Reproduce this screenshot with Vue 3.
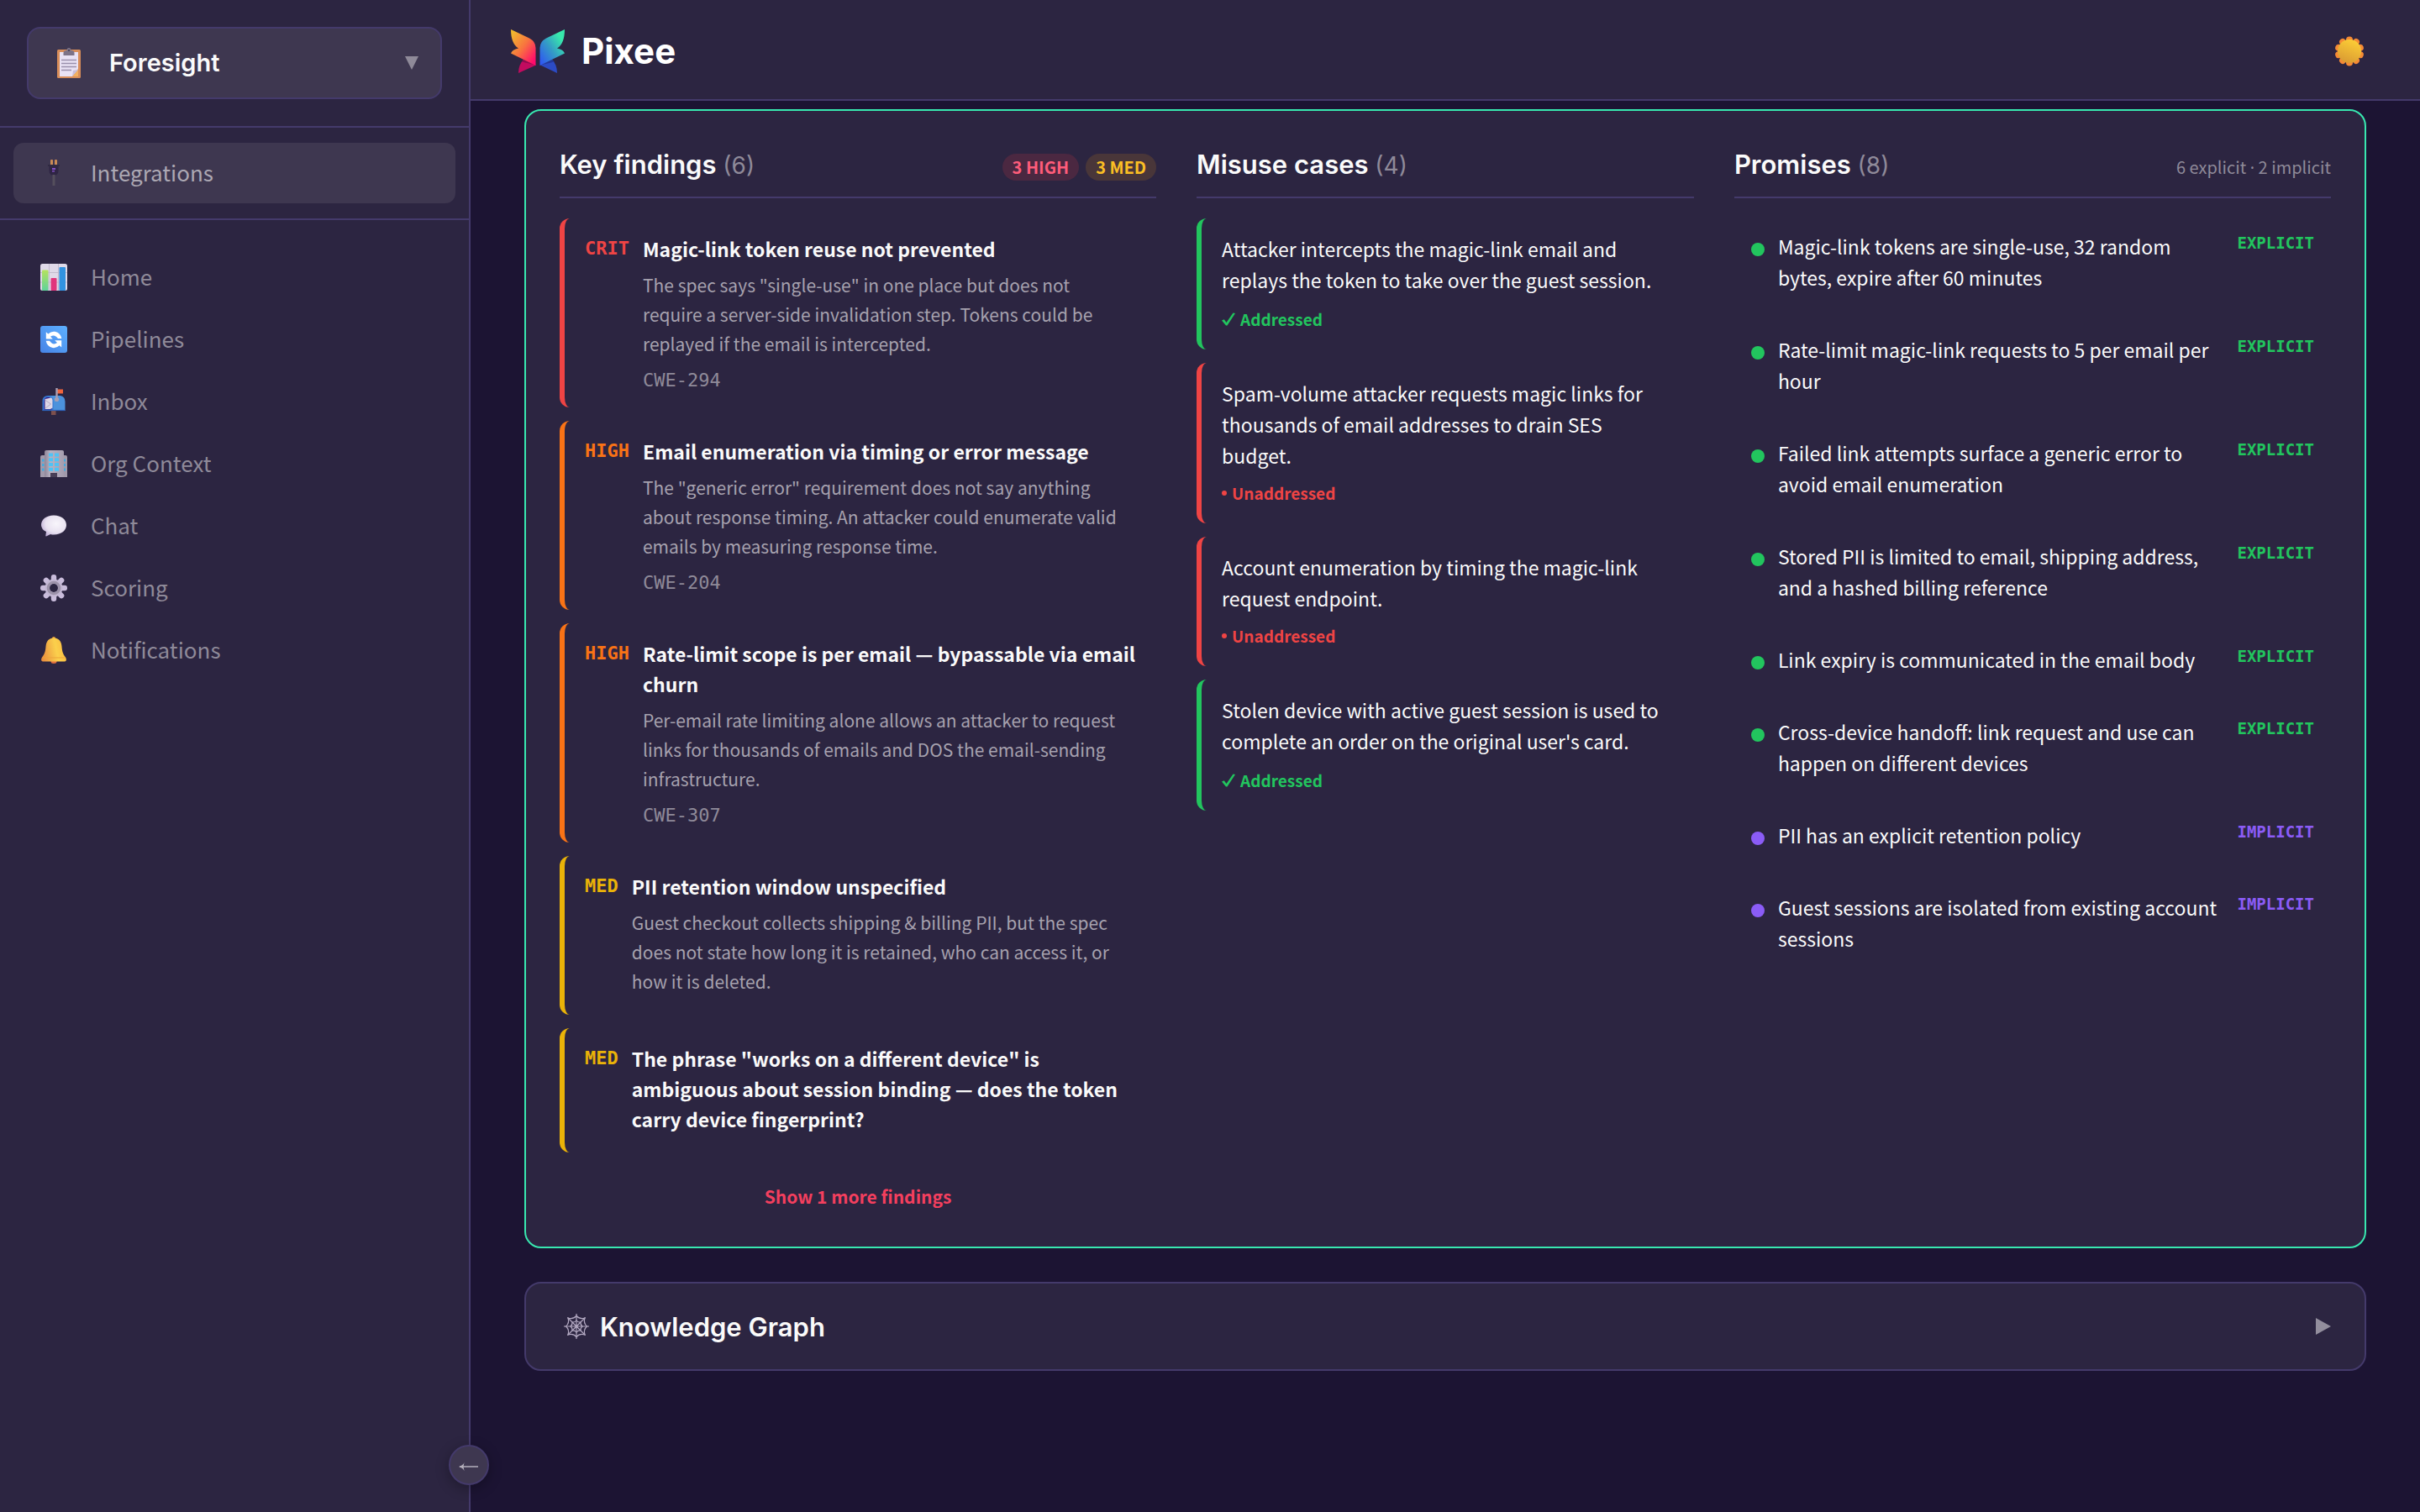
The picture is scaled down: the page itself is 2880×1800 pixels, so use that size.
<template>
  <div class="layout">
    <aside class="sidebar">
      <div class="product-wrap">
        <button type="button" class="product">
          <svg class="product-icon" viewBox="0 0 32 38" aria-hidden="true">
            <rect x="2" y="3" width="28" height="34" rx="1.500" fill="#d98e5a" />
            <path d="M5 6h22v20l-7 9H5z" fill="#e9e2f4" />
            <path d="M27 27v8h-7z" fill="#f2b061" />
            <path d="M20 35l1-7 6-1z" fill="#c9bfdc" />
            <path d="M9.500 10V7q0-3 4-3 0-3 2.500-3t2.500 3q4 0 4 3v3z" fill="#7d7387" />
            <circle cx="16" cy="4" r="1" fill="#3e3750" />
            <path d="M7 15.500h18M7 19.500h18M7 23.500h18M7 27.500h12" stroke="#9a90ac" stroke-width="1.500" />
          </svg>
          <span class="product-name">Foresight</span>
          <svg class="caret" viewBox="0 0 16 16" aria-hidden="true">
            <path d="M0 0h16L8 16z" fill="#8f8a99" />
          </svg>
        </button>
      </div>

      <div class="integrations-wrap">
        <a href="#integrations" class="nav-link active">
          <svg class="nav-icon" viewBox="0 0 32 32" aria-hidden="true">
            <rect x="12" y="0" width="3" height="7" rx="1" fill="#c98a55" />
            <rect x="17" y="0" width="3" height="7" rx="1" fill="#c98a55" />
            <rect x="9" y="6" width="14" height="2" fill="#302a42" />
            <path d="M10.500 8h11v5q0 4-3 5.500h-5q-3-1.500-3-5.500z" fill="#2f2544" />
            <path d="M14 10h4v2h-4zM14 13h3v1.500h-3z" fill="#8350c8" />
            <path d="M16 18v13" stroke="#544f5c" stroke-width="3" />
          </svg>
          <span class="nav-label">Integrations</span>
        </a>
      </div>

      <nav class="nav">
        <a v-for="item in navItems" :key="item.id" :href="`#${item.id}`" class="nav-link">
          <svg v-if="item.id === 'home'" class="nav-icon" viewBox="0 0 32 32" aria-hidden="true">
            <defs>
              <linearGradient id="bar-green" x1="0" y1="0" x2="0" y2="1">
                <stop offset="0" stop-color="#b5e25e" />
                <stop offset="1" stop-color="#5fd39a" />
              </linearGradient>
            </defs>
            <rect width="32" height="32" rx="2.500" fill="#dfd9e8" />
            <path d="M0 10.500h32M0 22h32M10.500 0v32M21.500 0v32" stroke="#c3bbcd" />
            <rect x="2" y="7.500" width="7.500" height="24.500" rx="1" fill="url(#bar-green)" />
            <rect x="12.500" y="17" width="7" height="15" rx="1" fill="#e0347c" />
            <rect x="22.500" y="4" width="7.500" height="28" rx="1" fill="#3192e0" />
          </svg>
          <svg v-else-if="item.id === 'pipelines'" class="nav-icon" viewBox="0 0 32 32" aria-hidden="true">
            <defs>
              <linearGradient id="tile-blue" x1="1" y1="0" x2="0" y2="1">
                <stop offset="0" stop-color="#5db0ff" />
                <stop offset="1" stop-color="#4683e6" />
              </linearGradient>
            </defs>
            <rect width="32" height="32" rx="3" fill="url(#tile-blue)" />
            <path d="M6.800 7.200v8.300h8L12 12.700q5-3.500 9 2.300h4.300Q24 8 17.500 6.800 13 6 9.300 9.600z" fill="#fff" />
            <path d="M25.200 25.600v-8.300h-8l2.800 2.800q-5 3.500-9-2.300H6.700q1.300 7 7.800 8.200 4.500.8 8.200-2.800z" fill="#fff" />
          </svg>
          <svg v-else-if="item.id === 'inbox'" class="nav-icon" viewBox="0 0 32 32" aria-hidden="true">
            <rect x="13" y="26" width="5.500" height="6" fill="#7d504d" />
            <path d="M9 9h14.500q6 1 6 7v11H9z" fill="#4c92dc" />
            <path d="M2.500 27V15.500q0-6.500 6.500-6.500t6.500 6.500V27z" fill="#3775cf" />
            <path d="M4.500 25.500V16q0-5 4.500-5t4.500 5v9.500z" fill="#34137c" />
            <path d="M5.500 13l7.500-1.500q1.500 1 1.500 3v9L12 25H5.500z" fill="#ddd6e6" />
            <path d="M6 14.500l6.500 4.500L6 24" fill="none" stroke="#aaa0b8" stroke-width=".8" />
            <path d="M2.500 26.500h27" stroke="#2e64bd" stroke-width="1.200" />
            <rect x="19" y="1.500" width="8" height="5" fill="#f0643c" />
            <path d="M19.500 0v13" stroke="#a79eb4" stroke-width="2.400" />
            <circle cx="19.500" cy="13.500" r="2.600" fill="#a79eb4" />
          </svg>
          <svg v-else-if="item.id === 'org-context'" class="nav-icon" viewBox="0 0 32 32" aria-hidden="true">
            <defs>
              <linearGradient id="tower" x1="0" y1="0" x2="1" y2="0">
                <stop offset="0" stop-color="#8f8799" />
                <stop offset=".3" stop-color="#b9b2c2" />
                <stop offset="1" stop-color="#a59daf" />
              </linearGradient>
            </defs>
            <path d="M0 32V8q0-2 2-2h28q2 0 2 2v24z" fill="#a19aab" />
            <path d="M5 32V2q0-2 2-2h19q2 0 2 2v30z" fill="url(#tower)" />
            <path d="M10 3.500h5v4h-5zM17 3.500h5v4h-5zM10 9.300h5v4h-5zM17 9.300h5v4h-5zM10 15h5v4h-5zM17 15h5v4h-5zM10 20.700h5v4h-5zM17 20.700h5v4h-5z" fill="#4fc3f5" />
            <path d="M2 10.500h2.500v3H2zM2 16h2.500v3H2zM2 21.500h2.500v3H2zM28 10.500h2v3h-2zM28 16h2v3h-2zM28 21.500h2v3h-2z" fill="#43a9dd" />
            <path d="M12 27h8v5h-8z" fill="#483f57" />
          </svg>
          <svg v-else-if="item.id === 'chat'" class="nav-icon" viewBox="0 0 32 32" aria-hidden="true">
            <defs>
              <radialGradient id="bubble" cx=".6" cy=".4" r=".7">
                <stop offset="0" stop-color="#f8f5fb" />
                <stop offset=".6" stop-color="#e9e2f1" />
                <stop offset="1" stop-color="#b9a7d2" />
              </radialGradient>
            </defs>
            <path d="M16 3.500c9 0 15 5 15 11.500s-6 11.500-15 11.500q-2 0-4-.5l-5 2.500q-1 0-.7-1l.7-4.500Q1 20 1 15C1 8.500 7 3.500 16 3.500z" fill="url(#bubble)" />
          </svg>
          <svg v-else-if="item.id === 'scoring'" class="nav-icon" viewBox="0 0 32 32" aria-hidden="true">
            <g fill="#c9bcdb">
              <rect v-for="angle in gearAngles" :key="angle" x="12.800" y="0" width="6.400" height="12" rx="3" :transform="`rotate(${angle} 16 16)`" />
            </g>
            <circle cx="16" cy="16" r="10.500" fill="#c2b6d2" />
            <circle cx="16" cy="16" r="6.800" fill="none" stroke="#9b91a8" stroke-width="3" />
            <circle cx="16" cy="16" r="5" fill="#2c2541" />
          </svg>
          <svg v-else class="nav-icon" viewBox="0 0 32 32" aria-hidden="true">
            <defs>
              <linearGradient id="bell" x1="0" y1=".6" x2="1" y2=".4">
                <stop offset="0" stop-color="#e98f3f" />
                <stop offset=".6" stop-color="#fbd04c" />
                <stop offset="1" stop-color="#fbb93e" />
              </linearGradient>
            </defs>
            <ellipse cx="16" cy="29.500" rx="3.500" ry="2.500" fill="#e2713f" />
            <circle cx="16" cy="2" r="2" fill="#e9a03d" />
            <path d="M16 1.500c6 0 9 4 9.500 10 .4 6 1.500 9 4.500 13 1.500 2.500 1 5-1 5H3c-2 0-2.500-2.500-1-5 3-4 4.100-7 4.500-13 .5-6 3.500-10 9.500-10z" fill="url(#bell)" />
            <path d="M3 25h26" stroke="#eda53a" />
          </svg>
          <span class="nav-label">{{ item.label }}</span>
        </a>
      </nav>

      <button type="button" class="collapse" aria-label="Collapse sidebar">
        <svg viewBox="0 0 24 12" aria-hidden="true">
          <path d="M1 6h22" stroke="#b5b0bc" stroke-width="1.500" />
          <path d="M6.500 1Q5 4.500 0 6q5 1.500 6.500 5l-1-5z" fill="#b5b0bc" />
        </svg>
      </button>
    </aside>

    <div class="content">
      <header class="topbar">
        <a href="#home" class="brand">
          <svg class="logo" viewBox="0 0 64 52" aria-hidden="true">
            <defs>
              <linearGradient id="wing-left" x1="0" y1=".15" x2=".8" y2="1">
                <stop offset="0" stop-color="#f0b82e" />
                <stop offset=".5" stop-color="#f8743f" />
                <stop offset="1" stop-color="#ff0a6c" />
              </linearGradient>
              <linearGradient id="wing-right" x1="1" y1=".15" x2=".15" y2="1">
                <stop offset=".15" stop-color="#38e8ac" />
                <stop offset=".55" stop-color="#349dc5" />
                <stop offset="1" stop-color="#2f5bf0" />
              </linearGradient>
            </defs>
            <path d="M15 36q-6 6-6 16l21-9.500z" fill="#c20b5f" />
            <path d="M15 36l15 6.500-17-4z" fill="#8d0c50" />
            <path d="M49 36q6 6 6 16l-20-9.500z" fill="#2c4bc4" />
            <path d="M49 36l-14 6.500 17-4z" fill="#23389a" />
            <path d="M0 0l22 10.500q7.500 4 7.500 11.500v21L0 28.500Q1.500 24 9 22.500 0 17 0 0z" fill="url(#wing-left)" />
            <path d="M64 0L42 10.500q-7.500 4-7.500 11.500v21L64 28.500Q62.500 24 55 22.500 64 17 64 0z" fill="url(#wing-right)" />
          </svg>
          <span class="brand-name">Pixee</span>
        </a>
        <button type="button" class="theme-toggle" aria-label="Toggle theme">
          <svg viewBox="0 0 40 40" aria-hidden="true">
            <defs>
              <linearGradient id="sun-face" x1=".7" y1="0" x2=".3" y2="1">
                <stop offset="0" stop-color="#fdce36" />
                <stop offset="1" stop-color="#d99a33" />
              </linearGradient>
            </defs>
            <g fill="#f58a35">
              <circle v-for="angle in sunAngles" :key="angle" cx="20" cy="6.500" r="4" :transform="`rotate(${angle} 20 20)`" />
            </g>
            <circle cx="20" cy="20" r="14" fill="url(#sun-face)" />
          </svg>
        </button>
      </header>

      <main class="main">
        <div class="panel">
          <section>
            <div class="column-header">
              <h2>Key findings <span class="count">(6)</span></h2>
              <div class="badges">
                <span class="badge badge-high">3 HIGH</span>
                <span class="badge badge-med">3 MED</span>
              </div>
            </div>
            <ul class="list">
              <li v-for="finding in findings" :key="finding.title" class="finding" :class="finding.severity">
                <span class="severity">{{ finding.severity.toUpperCase() }}</span>
                <div>
                  <h3 class="finding-title">{{ finding.title }}</h3>
                  <p v-if="finding.description" class="finding-description">{{ finding.description }}</p>
                  <div v-if="finding.cwe" class="cwe">{{ finding.cwe }}</div>
                </div>
              </li>
            </ul>
            <button type="button" class="show-more">Show 1 more findings</button>
          </section>

          <section>
            <div class="column-header">
              <h2>Misuse cases <span class="count">(4)</span></h2>
            </div>
            <ul class="list">
              <li v-for="misuse in misuseCases" :key="misuse.text" class="misuse" :class="{ addressed: misuse.addressed }">
                <p>{{ misuse.text }}</p>
                <div class="status">
                  <svg v-if="misuse.addressed" class="check" viewBox="0 0 16 16" aria-hidden="true">
                    <path d="M0 9.500l2.800-1.300L5.500 12 13.500.500 16 1 6.500 15.500H5z" fill="currentColor" />
                  </svg>
                  <span v-else class="bullet"></span>
                  {{ misuse.addressed ? 'Addressed' : 'Unaddressed' }}
                </div>
              </li>
            </ul>
          </section>

          <section>
            <div class="column-header">
              <h2>Promises <span class="count">(8)</span></h2>
              <span class="summary">6 explicit <span class="separator">·</span> 2 implicit</span>
            </div>
            <ul class="list">
              <li v-for="promise in promises" :key="promise.text" class="promise" :class="promise.type">
                <span class="dot"></span>
                <p>{{ promise.text }}</p>
                <span class="tag">{{ promise.type.toUpperCase() }}</span>
              </li>
            </ul>
          </section>
        </div>

        <button type="button" class="graph-card">
          <svg class="web" viewBox="0 0 32 32" aria-hidden="true">
            <g fill="none" stroke="#b3a9c2" stroke-width="1.200">
              <path d="M16 1v30M1 16h30M5.500 5.500l21 21M26.500 5.500l-21 21" />
              <path d="M16 3.500Q20 8 26 6q-2 6 2.500 10Q24 20 26 26q-6-2-10 2.500Q12 24 6 26q2-6-2.500-10Q8 12 6 6q6 2 10-2.500z" />
              <path d="M16 9q2 2.500 5 2-.5 3 2 5-2.500 2-2 5-3-.5-5 2-2-2.500-5-2 .5-3-2-5 2.500-2 2-5 3 .5 5-2z" />
            </g>
          </svg>
          <span class="graph-title">Knowledge Graph</span>
          <svg class="expand" viewBox="0 0 18 20" aria-hidden="true">
            <path d="M0 0l18 10L0 20z" fill="#938e9d" />
          </svg>
        </button>
      </main>
    </div>
  </div>
</template>

<script setup>
const navItems = [
  { id: 'home', label: 'Home' },
  { id: 'pipelines', label: 'Pipelines' },
  { id: 'inbox', label: 'Inbox' },
  { id: 'org-context', label: 'Org Context' },
  { id: 'chat', label: 'Chat' },
  { id: 'scoring', label: 'Scoring' },
  { id: 'notifications', label: 'Notifications' },
];

const findings = [
  {
    severity: 'crit',
    title: 'Magic-link token reuse not prevented',
    description: 'The spec says "single-use" in one place but does not require a server-side invalidation step. Tokens could be replayed if the email is intercepted.',
    cwe: 'CWE-294',
  },
  {
    severity: 'high',
    title: 'Email enumeration via timing or error message',
    description: 'The "generic error" requirement does not say anything about response timing. An attacker could enumerate valid emails by measuring response time.',
    cwe: 'CWE-204',
  },
  {
    severity: 'high',
    title: 'Rate-limit scope is per email — bypassable via email churn',
    description: 'Per-email rate limiting alone allows an attacker to request links for thousands of emails and DOS the email-sending infrastructure.',
    cwe: 'CWE-307',
  },
  {
    severity: 'med',
    title: 'PII retention window unspecified',
    description: 'Guest checkout collects shipping & billing PII, but the spec does not state how long it is retained, who can access it, or how it is deleted.',
  },
  {
    severity: 'med',
    title: 'The phrase "works on a different device" is ambiguous about session binding — does the token carry device fingerprint?',
  },
];

const misuseCases = [
  { text: 'Attacker intercepts the magic-link email and replays the token to take over the guest session.', addressed: true },
  { text: 'Spam-volume attacker requests magic links for thousands of email addresses to drain SES budget.', addressed: false },
  { text: 'Account enumeration by timing the magic-link request endpoint.', addressed: false },
  { text: "Stolen device with active guest session is used to complete an order on the original user's card.", addressed: true },
];

const promises = [
  { text: 'Magic-link tokens are single-use, 32 random bytes, expire after 60 minutes', type: 'explicit' },
  { text: 'Rate-limit magic-link requests to 5 per email per hour', type: 'explicit' },
  { text: 'Failed link attempts surface a generic error to avoid email enumeration', type: 'explicit' },
  { text: 'Stored PII is limited to email, shipping address, and a hashed billing reference', type: 'explicit' },
  { text: 'Link expiry is communicated in the email body', type: 'explicit' },
  { text: 'Cross-device handoff: link request and use can happen on different devices', type: 'explicit' },
  { text: 'PII has an explicit retention policy', type: 'implicit' },
  { text: 'Guest sessions are isolated from existing account sessions', type: 'implicit' },
];

const gearAngles = [0, 45, 90, 135, 180, 225, 270, 315];
const sunAngles = [0, 36, 72, 108, 144, 180, 216, 252, 288, 324];
</script>

<style>
body {
  margin: 0;
  background: #1c1433;
}
</style>

<style scoped>
.layout {
  display: flex;
  min-height: 100vh;
  color: #fafafa;
  font-family: "Noto Sans CJK SC", "Noto Sans", sans-serif;
  font-size: 23px;
}
* {
  box-sizing: border-box;
}
button {
  font: inherit;
  color: inherit;
  cursor: pointer;
}
h2,
h3,
p,
ul {
  margin: 0;
  padding: 0;
}
svg {
  display: block;
  flex: none;
}

.sidebar {
  position: relative;
  flex: none;
  width: 560px;
  background: #2c2541;
  border-right: 2px solid #443a6b;
}
.product-wrap {
  padding: 32px;
  border-bottom: 2px solid #443a6b;
}
.product {
  display: flex;
  align-items: center;
  width: 100%;
  height: 86px;
  padding: 0 26px 0 32px;
  background: #3e3750;
  border: 2px solid #443a6b;
  border-radius: 16px;
}
.product-icon {
  width: 32px;
  height: 38px;
}
.product-name {
  flex: 1;
  margin-left: 32px;
  padding-bottom: 2px;
  text-align: left;
  font-family: Inter, sans-serif;
  font-size: 29px;
  font-weight: 600;
}
.caret {
  width: 16px;
  height: 16px;
}
.integrations-wrap {
  padding: 18px 16px;
  border-bottom: 2px solid #443a6b;
}
.nav {
  display: flex;
  flex-direction: column;
  gap: 2px;
  padding: 32px 16px;
}
.nav-link {
  display: flex;
  align-items: center;
  gap: 28px;
  height: 72px;
  padding: 0 32px;
  border-radius: 12px;
  color: #8f8a99;
  font-size: 26px;
  text-decoration: none;
}
.nav-link.active {
  background: #3e3750;
  color: #aca8b3;
}
.nav-label {
  padding-bottom: 4px;
}
.nav-icon {
  width: 32px;
  height: 32px;
}
.collapse {
  position: absolute;
  right: -24px;
  bottom: 32px;
  display: flex;
  align-items: center;
  justify-content: center;
  width: 48px;
  height: 48px;
  padding: 4px 0 0;
  background: #3e3750;
  border: 2px solid #443a6b;
  border-radius: 50%;
  box-shadow: 0 4px 16px rgba(0, 0, 0, 0.3);
}
.collapse svg {
  width: 24px;
  height: 12px;
}

.content {
  flex: 1;
  min-width: 0;
}
.topbar {
  display: flex;
  align-items: center;
  justify-content: space-between;
  height: 120px;
  padding: 3px 64px 0 48px;
  background: #2c2541;
  border-bottom: 2px solid #443a6b;
}
.brand {
  display: flex;
  align-items: center;
  gap: 20px;
  color: #fff;
  text-decoration: none;
}
.logo {
  width: 64px;
  height: 52px;
}
.brand-name {
  font-family: Inter, sans-serif;
  font-size: 42px;
  font-weight: 700;
}
.theme-toggle {
  padding: 0;
  background: none;
  border: 0;
}
.theme-toggle svg {
  width: 40px;
  height: 40px;
}

.main {
  padding: 10px 64px;
}
.panel {
  display: grid;
  grid-template-columns: 1.2fr 1fr 1.2fr;
  gap: 48px;
  padding: 40px;
  background: #2c2541;
  border: 2px solid #38e8b0;
  border-radius: 20px;
}
.column-header {
  display: flex;
  align-items: baseline;
  justify-content: space-between;
  height: 64px;
  margin-bottom: 24px;
  border-bottom: 2px solid #443a6b;
}
h2 {
  font-family: Inter, sans-serif;
  font-size: 31px;
  font-weight: 600;
  line-height: 48px;
}
.count {
  color: #8f8a99;
  font-size: 28px;
  font-weight: 400;
}
.badges {
  display: flex;
  gap: 8px;
}
.badge {
  padding: 0 12px;
  border-radius: 16px;
  font-size: 20px;
  font-weight: 700;
  line-height: 32px;
}
.badge-high {
  background: #4b2841;
  color: #ff5c7a;
}
.badge-med {
  background: #493639;
  color: #fbbf24;
}
.summary {
  color: #8f8a99;
  font-size: 20px;
}
.separator {
  font-family: "Noto Sans", sans-serif;
}
.list {
  display: flex;
  flex-direction: column;
  gap: 16px;
  list-style: none;
}

.finding {
  display: flex;
  gap: 16px;
  padding: 18px 20px 22px 24px;
  border-left: 6px solid;
  border-radius: 12px;
}
.crit {
  color: #ef4444;
}
.high {
  color: #f97316;
}
.med {
  color: #eab308;
}
.severity {
  font-family: "DejaVu Sans Mono", monospace;
  font-size: 22px;
  font-weight: 700;
  line-height: 36px;
}
.finding-title {
  color: #fafafa;
  font-size: 23px;
  font-weight: 600;
  line-height: 36px;
}
.finding-description {
  margin-top: 8px;
  padding-right: 16px;
  color: #a6a1ae;
  font-size: 21px;
  line-height: 35px;
}
.cwe {
  margin-top: 16px;
  color: #8f8a99;
  font-family: "DejaVu Sans Mono", monospace;
  font-size: 22px;
  line-height: 20px;
}
.show-more {
  display: block;
  width: 100%;
  margin-top: 32px;
  padding: 0;
  background: none;
  border: 0;
  color: #f43f5e;
  font-size: 21px;
  font-weight: 600;
  line-height: 40px;
}

.misuse {
  padding: 18px 24px;
  border-left: 6px solid #ef4444;
  border-radius: 12px;
}
.misuse.addressed {
  border-color: #22c55e;
}
.misuse p {
  line-height: 37px;
}
.status {
  display: flex;
  align-items: center;
  gap: 6px;
  margin-top: 8px;
  color: #ef4444;
  font-size: 19px;
  font-weight: 600;
  line-height: 36px;
}
.addressed .status {
  margin-top: 10px;
  color: #22c55e;
}
.check {
  width: 16px;
  height: 16px;
}
.bullet {
  width: 6px;
  height: 6px;
  border-radius: 50%;
  background: currentColor;
}

.promise {
  display: flex;
  gap: 16px;
  padding: 15px 20px 18px;
}
.promise p {
  flex: 1;
  line-height: 37px;
}
.dot {
  flex: none;
  width: 16px;
  height: 16px;
  margin-top: 14px;
  border-radius: 50%;
  background: #22c55e;
}
.tag {
  margin-top: 2px;
  color: #22c55e;
  font-family: "DejaVu Sans Mono", monospace;
  font-size: 19px;
  font-weight: 700;
  line-height: 24px;
}
.implicit .dot {
  background: #8b5cf6;
}
.implicit .tag {
  color: #8b5cf6;
}

.graph-card {
  display: flex;
  align-items: center;
  width: 100%;
  height: 106px;
  margin-top: 40px;
  padding: 0 40px 0 44px;
  background: #2c2541;
  border: 2px solid #443a6b;
  border-radius: 20px;
}
.web {
  width: 32px;
  height: 32px;
}
.graph-title {
  flex: 1;
  margin-left: 12px;
  text-align: left;
  font-family: Inter, sans-serif;
  font-size: 31px;
  font-weight: 600;
}
.expand {
  width: 18px;
  height: 20px;
}
</style>
